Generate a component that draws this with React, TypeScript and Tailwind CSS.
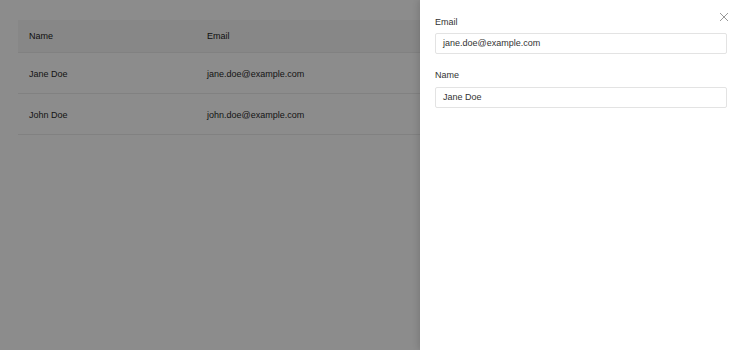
import React from "react";

export default function App() {
  const rows = [
    { name: "Jane Doe", email: "jane.doe@example.com" },
    { name: "John Doe", email: "john.doe@example.com" },
  ];
  return (
    <div
      className="relative w-[740px] h-[350px] overflow-hidden bg-white text-[9px] text-[#1a1a1a]"
      style={{ fontFamily: '"Liberation Sans", Arial, sans-serif' }}
    >
      <div className="pt-[20px] px-[18px]">
        <div className="w-[704px]">
          <div className="flex h-[33px] items-center bg-[#f6f6f6] border-b border-[#ececec] pt-[1px]">
            <div className="w-[189px] pl-[11px]">Name</div>
            <div className="flex-1">Email</div>
          </div>
          {rows.map((r) => (
            <div key={r.name} className="flex h-[41px] items-center border-b border-[#ececec] text-[#2a2a2a] pt-[3px]">
              <div className="w-[189px] pl-[11px]">{r.name}</div>
              <div className="flex-1">{r.email}</div>
            </div>
          ))}
        </div>
      </div>

      <div className="absolute inset-0 bg-black/45" />

      <div className="absolute top-0 right-0 bottom-0 w-[320px] bg-white shadow-[-2px_0_6px_rgba(0,0,0,0.12)] pl-[15px] pr-[13px] pt-[16px]">
        <button className="absolute top-[11px] right-[10px] w-[12px] h-[12px] flex items-center justify-center text-[#999]">
          <svg width="10" height="10" viewBox="0 0 10 10" fill="none" stroke="currentColor" strokeWidth="1">
            <path d="M1 1L9 9M9 1L1 9" />
          </svg>
        </button>
        <div className="flex flex-col">
          <label className="text-[9px] text-[#333] leading-[12px]">Email</label>
          <div className="mt-[5px] h-[21px] border border-[#e3e3e3] rounded-[2px] flex items-center px-[7px] text-[#333]">
            jane.doe@example.com
          </div>
          <label className="mt-[15px] text-[9px] text-[#333] leading-[12px]">Name</label>
          <div className="mt-[6px] h-[21px] border border-[#e3e3e3] rounded-[2px] flex items-center px-[7px] text-[#333]">
            Jane Doe
          </div>
        </div>
      </div>
    </div>
  );
}
